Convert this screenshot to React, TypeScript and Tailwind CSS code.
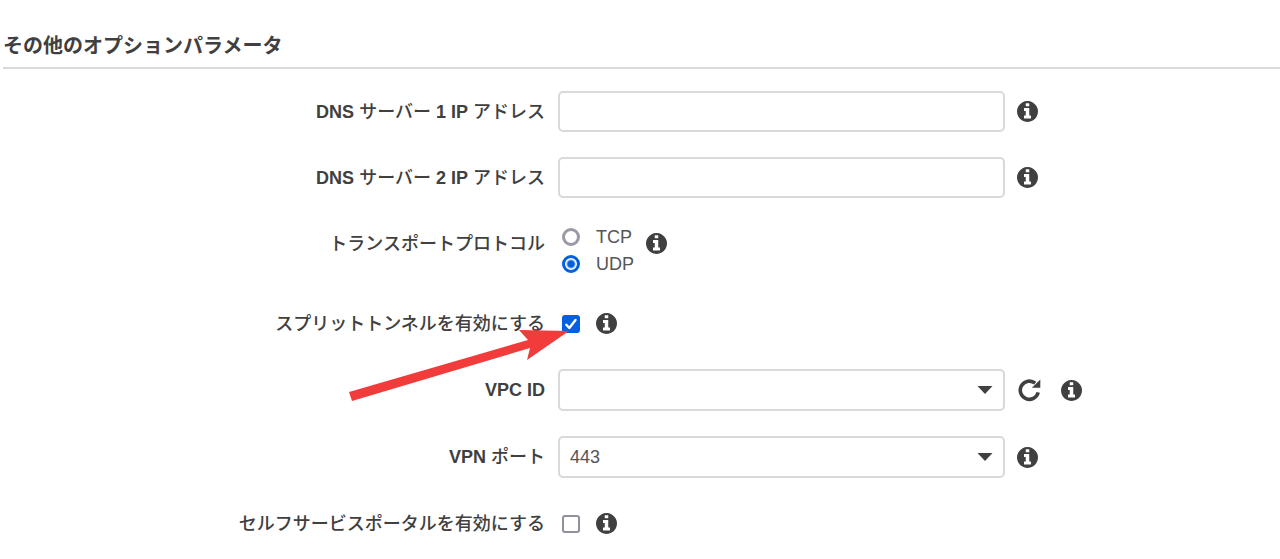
import { useState, type ReactNode } from "react";

function InfoButton({ label }: { label: string }) {
  return (
    <button type="button" aria-label={`${label}の情報`} className="shrink-0 text-[#404040]">
      <svg viewBox="128 128 1536 1536" className="size-[21px]" fill="currentColor" aria-hidden="true">
        <path d="M1152 1376v-160q0-14-9-23t-23-9h-96v-512q0-14-9-23t-23-9h-320q-14 0-23 9t-9 23v160q0 14 9 23t23 9h96v320h-96q-14 0-23 9t-9 23v160q0 14 9 23t23 9h448q14 0 23-9t9-23zm-128-896v-160q0-14-9-23t-23-9h-192q-14 0-23 9t-9 23v160q0 14 9 23t23 9h192q14 0 23-9t9-23zm640 416q0 209-103 385.5t-279.5 279.5-385.5 103-385.5-103-279.5-279.5-103-385.5 103-385.5 279.5-279.5 385.5-103 385.5 103 279.5 279.5 103 385.5z" />
      </svg>
    </button>
  );
}

function Row({ label, htmlFor, id, children }: { label: ReactNode; htmlFor?: string; id?: string; children: ReactNode }) {
  const style = "flex h-[41px] items-center justify-end pt-0.5 text-right font-medium";
  return (
    <div className="grid grid-cols-[545fr_722fr] gap-[13px]">
      {htmlFor ? (
        <label htmlFor={htmlFor} className={style}>
          <span>{label}</span>
        </label>
      ) : (
        <div id={id} className={style}>
          <span>{label}</span>
        </div>
      )}
      <div className="flex min-h-[41px] items-center gap-3">{children}</div>
    </div>
  );
}

function TextField({ id }: { id: string }) {
  return (
    <input
      id={id}
      type="text"
      className="h-[41px] w-[447px] min-w-0 rounded-[5px] border-2 border-[#d9d9d9] bg-white px-[10px]"
    />
  );
}

function SelectField({ id, options }: { id: string; options: string[] }) {
  return (
    <div className="grid w-[447px] min-w-0 items-center">
      <select
        id={id}
        className="col-start-1 row-start-1 h-[42px] w-full appearance-none rounded-[5px] border-2 border-[#d9d9d9] bg-white px-[10px] text-[#555]"
      >
        {options.map((o) => (
          <option key={o}>{o}</option>
        ))}
      </select>
      <svg viewBox="0 0 16 8" className="pointer-events-none col-start-1 row-start-1 mr-3 h-2 w-4 justify-self-end" fill="#404040" aria-hidden="true">
        <path d="M0.5 0h15L8 8z" />
      </svg>
    </div>
  );
}

function CheckField({ id, initial }: { id: string; initial: boolean }) {
  const [checked, setChecked] = useState(initial);
  return (
    <div className="ml-1 grid size-[18px] shrink-0">
      <input
        id={id}
        type="checkbox"
        checked={checked}
        onChange={(e) => setChecked(e.target.checked)}
        className="col-start-1 row-start-1 size-[18px] appearance-none rounded-[3px] border-2 border-[#8f8f9d] bg-white checked:border-[#0060df] checked:bg-[#0060df]"
      />
      {checked && (
        <svg viewBox="0 0 18 18" className="pointer-events-none col-start-1 row-start-1" fill="none" stroke="#fff" strokeWidth="2.4" strokeLinecap="round" strokeLinejoin="round" aria-hidden="true">
          <path d="M4.3 9.8l3 3.2 6.2-8" />
        </svg>
      )}
    </div>
  );
}

function ProtocolOption({ value, initial }: { value: string; initial?: boolean }) {
  return (
    <label className="ml-1 flex h-[27px] items-center gap-4 text-[#555]">
      <input
        type="radio"
        name="protocol"
        value={value}
        defaultChecked={initial}
        className="size-[18px] appearance-none rounded-full border-3 border-[#9a9aa7] bg-white checked:border-[#0060df] checked:bg-[radial-gradient(circle,#0060df_3px,#fff_5px)]"
      />
      <span className="pt-0.5">{value}</span>
    </label>
  );
}

export default function App() {
  return (
    <main className="bg-white pt-7 pb-4 pl-[3px] font-['Liberation_Sans','Noto_Sans_CJK_JP',sans-serif] text-[18px] leading-[27px] text-[#404040]">
      <h2 className="border-b-2 border-[#d9d9d9] pt-0.5 pb-[5px] text-[20px] leading-8 font-bold">その他のオプションパラメータ</h2>
      <form className="relative -ml-[3px] mt-[22px] flex flex-col gap-[25px]">
        <Row htmlFor="dns1" label={<><b>DNS</b> サーバー <b>1 IP</b> アドレス</>}>
          <TextField id="dns1" />
          <InfoButton label="DNS サーバー 1 IP アドレス" />
        </Row>
        <Row htmlFor="dns2" label={<><b>DNS</b> サーバー <b>2 IP</b> アドレス</>}>
          <TextField id="dns2" />
          <InfoButton label="DNS サーバー 2 IP アドレス" />
        </Row>
        <Row id="protocol-label" label="トランスポートプロトコル">
          <div role="radiogroup" aria-labelledby="protocol-label" className="flex h-[55px] flex-col">
            <ProtocolOption value="TCP" />
            <ProtocolOption value="UDP" initial />
          </div>
          <div className="flex h-[41px] items-center self-start">
            <InfoButton label="トランスポートプロトコル" />
          </div>
        </Row>
        <Row htmlFor="split" label="スプリットトンネルを有効にする">
          <CheckField id="split" initial />
          <div className="ml-1 flex">
            <InfoButton label="スプリットトンネルを有効にする" />
          </div>
        </Row>
        <Row htmlFor="vpc" label={<b>VPC ID</b>}>
          <SelectField id="vpc" options={[""]} />
          <button type="button" aria-label="更新" className="mr-2 shrink-0 text-[#404040]">
            <svg viewBox="0 0 24 24" className="size-6" fill="none" stroke="currentColor" strokeWidth="3.6" aria-hidden="true">
              <path d="M21.2 14.4A9.1 9.1 0 1 1 18.2 5.2" />
              <path d="M23.3 1.6v8.2h-8.4z" fill="currentColor" stroke="none" />
            </svg>
          </button>
          <InfoButton label="VPC ID" />
        </Row>
        <Row htmlFor="port" label={<><b>VPN</b> ポート</>}>
          <SelectField id="port" options={["443", "1194"]} />
          <InfoButton label="VPN ポート" />
        </Row>
        <Row htmlFor="portal" label="セルフサービスポータルを有効にする">
          <CheckField id="portal" initial={false} />
          <div className="ml-1 flex">
            <InfoButton label="セルフサービスポータルを有効にする" />
          </div>
        </Row>
        <svg viewBox="0 0 224 74" className="pointer-events-none absolute top-[238px] left-[27.2%] h-[74px] w-[224px]" aria-hidden="true">
          <path d="M221 2L171 1L180 11L1 63L4 72L182 19L179 31Z" fill="#f23c3c" />
        </svg>
      </form>
    </main>
  );
}
